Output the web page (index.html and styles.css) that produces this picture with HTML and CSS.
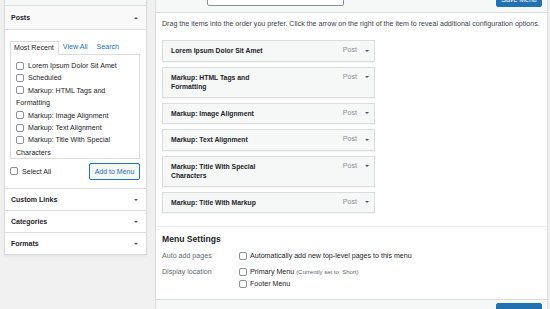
FILE: index.html
```html
<!DOCTYPE html>
<html lang="en">
<head>
        <meta charset="UTF-8">
        <meta name="viewport" content="width=device-width, initial-scale=1.0">
        <title>Menus</title>
        <link rel="stylesheet" href="styles.css">
</head>
<body>
        <div class="page">
                <aside class="side">
                        <div class="acc-prev"></div>
                        <div class="acc-title open">Posts <span class="arrow up"></span></div>
                        <div class="acc-body">
                                <ul class="tabs">
                                        <li class="active">Most Recent</li>
                                        <li class="link">View All</li>
                                        <li class="link">Search</li>
                                </ul>
                                <div class="tab-panel">
                                        <ul class="checklist">
                                                <li><span class="cb"></span>Lorem Ipsum Dolor Sit Amet</li>
                                                <li><span class="cb"></span>Scheduled</li>
                                                <li><span class="cb"></span>Markup: HTML Tags and Formatting</li>
                                                <li><span class="cb"></span>Markup: Image Alignment</li>
                                                <li><span class="cb"></span>Markup: Text Alignment</li>
                                                <li><span class="cb"></span>Markup: Title With Special Characters</li>
                                        </ul>
                                </div>
                                <div class="button-controls">
                                        <label class="select-all"><span class="cb"></span>Select All</label>
                                        <button class="btn-secondary">Add to Menu</button>
                                </div>
                        </div>
                        <div class="acc-title">Custom Links <span class="arrow"></span></div>
                        <div class="acc-title">Categories <span class="arrow"></span></div>
                        <div class="acc-title">Formats <span class="arrow"></span></div>
                </aside>

                <main class="menu-box">
                        <div class="menu-head">
                                <span class="name-input"></span>
                                <button class="btn-primary">Save Menu</button>
                        </div>
                        <div class="menu-body">
                                <p class="drag-note">Drag the items into the order you prefer. Click the arrow on the right of the item to reveal additional configuration options.</p>
                                <ul class="menu-items">
                                        <li><span class="item-title">Lorem Ipsum Dolor Sit Amet</span><span class="item-type">Post</span><span class="arrow"></span></li>
                                        <li><span class="item-title">Markup: HTML Tags and Formatting</span><span class="item-type">Post</span><span class="arrow"></span></li>
                                        <li><span class="item-title">Markup: Image Alignment</span><span class="item-type">Post</span><span class="arrow"></span></li>
                                        <li><span class="item-title">Markup: Text Alignment</span><span class="item-type">Post</span><span class="arrow"></span></li>
                                        <li><span class="item-title">Markup: Title With Special Characters</span><span class="item-type">Post</span><span class="arrow"></span></li>
                                        <li><span class="item-title">Markup: Title With Markup</span><span class="item-type">Post</span><span class="arrow"></span></li>
                                </ul>
                                <div class="settings">
                                        <h3>Menu Settings</h3>
                                        <div class="set-grid">
                                                <span class="set-label">Auto add pages</span>
                                                <div class="set-field">
                                                        <div><span class="cb"></span>Automatically add new top-level pages to this menu</div>
                                                </div>
                                                <span class="set-label">Display location</span>
                                                <div class="set-field">
                                                        <div><span class="cb"></span>Primary Menu <span class="note">(Currently set to: Short)</span></div>
                                                        <div><span class="cb"></span>Footer Menu</div>
                                                </div>
                                        </div>
                                </div>
                        </div>
                        <div class="menu-foot">
                                <button class="btn-primary">Save Menu</button>
                        </div>
                </main>
        </div>
</body>
</html>
```

FILE: styles.css
```css
* {
        margin: 0;
        padding: 0;
        box-sizing: border-box;
}

body {
        height: 309px;
        overflow: hidden;
        background-color: #f0f0f1;
        font-family: "Liberation Sans", Arial, sans-serif;
        font-size: 7.1px;
        color: #1d2327;
}

ul {
        list-style: none;
}

button {
        font-family: inherit;
        font-size: 7px;
        border-radius: 2px;
        cursor: pointer;
}

.page {
        display: flex;
        align-items: flex-start;
        gap: 8px;
        padding: 0 2px 0 4px;
}

/* left column */

.side {
        width: 143px;
        flex: none;
        margin-top: -10px;
        background-color: #fff;
        border: 1px solid #dcdcde;
        box-shadow: 0 1px 2px rgba(0, 0, 0, 0.06);
}

.acc-prev {
        height: 15px;
        background-color: #f6f7f7;
        border-bottom: 1px solid #dcdcde;
}

.acc-title {
        height: 22px;
        display: flex;
        align-items: center;
        justify-content: space-between;
        padding: 0 8px 0 6px;
        font-weight: bold;
        font-size: 7px;
        border-top: 1px solid #dcdcde;
}

.acc-title.open {
        height: 24px;
        border-top: none;
        border-bottom: 1px solid #dcdcde;
        background-color: #f9f9f9;
}

.arrow {
        width: 0;
        height: 0;
        border-left: 2px solid transparent;
        border-right: 2px solid transparent;
        border-top: 2.5px solid #50575e;
}

.arrow.up {
        border-top: none;
        border-bottom: 2.5px solid #50575e;
}

.acc-body {
        padding: 11px 6px 8px 5px;
}

.tabs {
        display: flex;
        height: 13px;
}

.tabs li {
        padding: 0 4px;
        line-height: 12px;
}

.tabs li.active {
        position: relative;
        z-index: 1;
        background-color: #fff;
        border: 1px solid #dcdcde;
        border-bottom: none;
        height: 14px;
        padding: 0 4px 0 3px;
}

.tabs li.link {
        color: #2271b1;
        padding: 0 5px 0 4px;
}

.tab-panel {
        height: 105px;
        overflow: hidden;
        border: 1px solid #dcdcde;
        padding: 5px 6px 0 5px;
}

.checklist li {
        line-height: 12.4px;
}

.cb {
        display: inline-block;
        width: 8px;
        height: 8px;
        margin-right: 4px;
        vertical-align: -1.5px;
        background-color: #fff;
        border: 1px solid #8c8f94;
        border-radius: 2px;
}

.button-controls {
        display: flex;
        align-items: center;
        justify-content: space-between;
        margin-top: 4px;
}

.btn-secondary {
        width: 51px;
        height: 17px;
        color: #2271b1;
        background-color: #f6f7f7;
        border: 1px solid #2271b1;
}

/* right column */

.menu-box {
        flex: 1;
        margin-top: -20px;
        background-color: #fff;
        border: 1px solid #dcdcde;
        box-shadow: 0 1px 1px rgba(0, 0, 0, 0.04);
}

.menu-head {
        height: 32px;
        display: flex;
        align-items: flex-end;
        padding: 0 5px 6px 0;
        background-color: #f6f7f7;
        border-bottom: 1px solid #dcdcde;
}

.name-input {
        width: 137px;
        height: 16px;
        margin-left: 51px;
        background-color: #fff;
        border: 1px solid #8c8f94;
        border-radius: 2px;
}

.btn-primary {
        width: 46px;
        height: 16px;
        margin-left: auto;
        color: #fff;
        background-color: #2271b1;
        border: 1px solid #2271b1;
}

.menu-head .btn-primary {
        margin-bottom: -1px;
}

.drag-note {
        padding: 6.5px 6px 0;
        line-height: 9px;
        color: #3c434a;
}

.menu-items {
        display: flex;
        flex-direction: column;
        gap: 5px;
        width: 219px;
        margin-top: 11.5px;
        padding-left: 6px;
}

.menu-items li {
        display: flex;
        align-items: flex-start;
        padding: 5px 5px 5px 8px;
        line-height: 9.5px;
        background-color: #f6f7f7;
        border: 1px solid #dcdcde;
        box-shadow: 0 1px 1px rgba(0, 0, 0, 0.04);
}

.item-title {
        width: 105px;
        font-size: 6.8px;
        font-weight: bold;
}

.item-type {
        margin-left: auto;
        margin-right: 8px;
        color: #8c8f94;
}

.menu-items .arrow {
        margin-top: 3.5px;
}

.settings {
        margin-top: 13px;
        padding: 6.5px 6px 9px;
        border-top: 1px solid #ececec;
}

.settings h3 {
        font-size: 8.6px;
        line-height: 11px;
        margin-bottom: 5.5px;
}

.set-grid {
        display: grid;
        grid-template-columns: 77px 1fr;
        row-gap: 4px;
        line-height: 12px;
}

.set-label {
        color: #646970;
}

.set-field .cb {
        margin-right: 3px;
}

.note {
        font-size: 6px;
        color: #646970;
}

.menu-foot {
        height: 30px;
        display: flex;
        padding: 3px 5px 0;
        background-color: #f6f7f7;
        border-top: 1px solid #dcdcde;
}
```
